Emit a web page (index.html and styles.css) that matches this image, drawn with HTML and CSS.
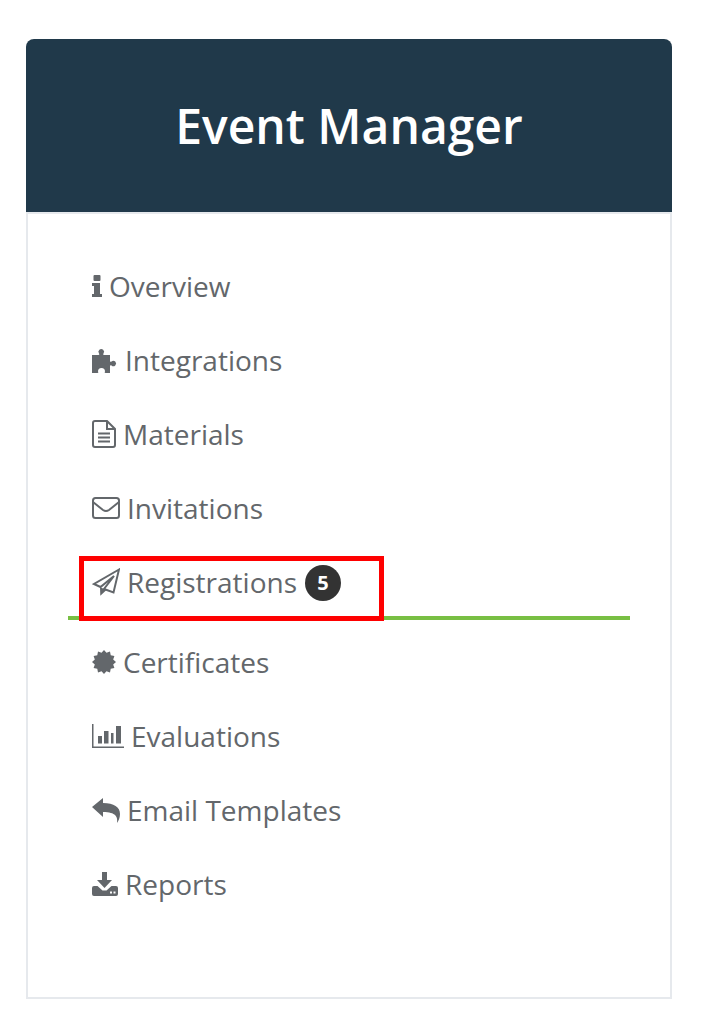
FILE: index.html
```html
<!DOCTYPE html>
<html lang="en">
<head>
  <meta charset="UTF-8">
  <title>Event Manager</title>
  <link rel="stylesheet" href="styles.css">
</head>
<body>
  <div class="card">
    <div class="card-head">
      <h1>Event Manager</h1>
    </div>
    <ul class="side-nav">
      <li>
        <svg class="icon" width="10" height="22" viewBox="0 0 10 22"><rect x="1.500" y="0" width="7" height="6" rx="1"/><path d="M0 8h8v11h2v3H0v-3h2v-8H0z"/></svg>
        Overview
      </li>
      <li>
        <svg class="icon" width="26" height="25" viewBox="0 0 26 25"><path d="M0 7H6.500C7.500 7 7.500 6.200 7 5.500A2.800 2.800 0 1 1 11.500 5.500C11 6.200 11 7 12 7H18V13C18 14 19 14 19.500 13.500A2.700 2.700 0 1 1 19.500 17.500C19 17 18 17 18 18V25H13.500C12.500 25 12.500 24 13 23.500A3.300 3.300 0 1 0 6 23.500C6.500 24 6.500 25 5.500 25H0Z"/></svg>
        Integrations
      </li>
      <li>
        <svg class="icon line" width="24" height="28" viewBox="0 0 24 28"><path d="M3 1H15L23 9V25A2 2 0 0 1 21 27H3A2 2 0 0 1 1 25V3A2 2 0 0 1 3 1Z"/><path d="M15 1V9H23M6 13.500H18M6 17.500H18M6 21.500H18"/></svg>
        Materials
      </li>
      <li>
        <svg class="icon line" width="28" height="22" viewBox="0 0 28 22"><rect x="1" y="1" width="26" height="20" rx="2.500"/><path d="M1 5L11 13Q14 15 17 13L27 5"/></svg>
        Invitations
      </li>
      <li class="active">
        <svg class="icon line" width="28" height="28" viewBox="0 0 28 28"><path d="M27 1.500L2 16L8.500 19L22 8L12 21L21.500 24.500Z"/><path class="solid" d="M8 19L8.300 27.700L14.500 22L11 20.500Z"/></svg>
        Registrations
        <span class="badge">5</span>
        <span class="highlight"></span>
      </li>
      <li>
        <svg class="icon" width="24" height="24" viewBox="0 0 24 24"><polygon points="24,12 21.180,14.460 22.390,18 18.720,18.720 18,22.390 14.460,21.180 12,24 9.540,21.180 6,22.390 5.280,18.720 1.610,18 2.820,14.460 0,12 2.820,9.540 1.610,6 5.280,5.280 6,1.610 9.540,2.820 12,0 14.460,2.820 18,1.610 18.720,5.280 22.390,6 21.180,9.540"/></svg>
        Certificates
      </li>
      <li>
        <svg class="icon" width="32" height="24" viewBox="0 0 32 24"><path d="M0 0h1.500v22.500H32V24H0z"/><path d="M6 12h4v7.500H6zM12 7h4.500v12.500H12zM19 9h2.500v10.500H19zM24 2h5v17.500h-5z"/></svg>
        Evaluations
      </li>
      <li>
        <svg class="icon" width="28" height="25" viewBox="0 0 28 25"><path d="M0 9L11 0V5C22 5 28 9 28 16C28 20 26.500 23 25 25C26 19 24 14 11 14V19Z"/></svg>
        Email Templates
      </li>
      <li>
        <svg class="icon" width="26" height="24" viewBox="0 0 26 24"><path fill-rule="evenodd" d="M10 0h5v8h5l-7.500 8L5 8h5zM2 14h3.500l5 4.500h4L19.500 14H24a2 2 0 0 1 2 2v6a2 2 0 0 1-2 2H2a2 2 0 0 1-2-2v-6a2 2 0 0 1 2-2zM18 19.500v2h2v-2zM21.500 19.500v2h2v-2z"/></svg>
        Reports
      </li>
    </ul>
  </div>
</body>
</html>
```

FILE: styles.css
```css
body {
  margin: 0;
  padding: 39px 38px 0 26px;
  background: white;
  font-family: 'Open Sans', sans-serif;
  color: #63676b;
}

.card-head {
  height: 173px;
  display: flex;
  align-items: center;
  justify-content: center;
  background: #20394a;
  border-radius: 8px 8px 0 0;
}

.card-head h1 {
  margin: 0;
  color: white;
  font-size: 48px;
  font-weight: 600;
}

.side-nav {
  margin: 0;
  padding: 35px 40px 76px;
  list-style: none;
  border: 2px solid #e6e9ed;
}

.side-nav li {
  position: relative;
  height: 74px;
  padding-left: 24px;
  display: flex;
  align-items: center;
  font-size: 28px;
}

.side-nav li.active {
  height: 69px;
  padding-top: 2px;
  margin-bottom: 5px;
  border-bottom: 4px solid #78bf43;
}

.icon {
  margin-right: 7px;
  fill: #63676b;
  flex: none;
}

.icon.line {
  fill: none;
  stroke: #63676b;
  stroke-width: 2;
}

.icon .solid {
  fill: #63676b;
  stroke: none;
}

.badge {
  width: 36px;
  height: 36px;
  margin: 2px 0 0 8px;
  display: flex;
  align-items: center;
  justify-content: center;
  border-radius: 50%;
  background: #333;
  color: white;
  font-size: 20px;
  font-weight: 700;
}

.highlight {
  position: absolute;
  left: 11px;
  top: 11px;
  width: 305px;
  height: 65px;
  box-sizing: border-box;
  border: 5px solid #fe0000;
}
```
